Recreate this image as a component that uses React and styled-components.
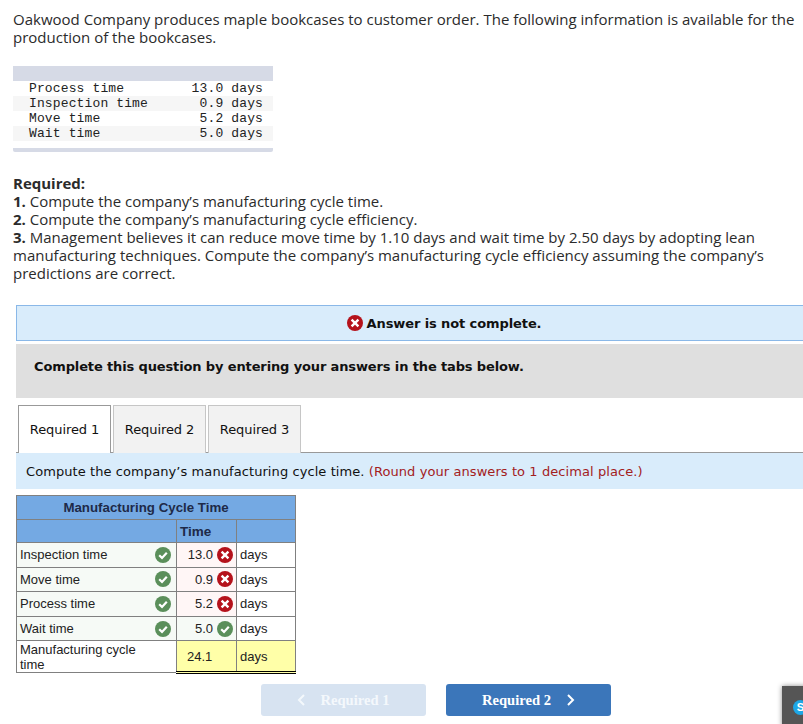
import React from 'react';
import styled, { createGlobalStyle } from 'styled-components';

const Global = createGlobalStyle`
  html, body { margin: 0; padding: 0; background: #fff; }
  body { width: 803px; height: 724px; overflow: hidden; position: relative; font-family: "Open Sans", "Liberation Sans", sans-serif; color: #222; }
`;
const Page = styled.div`display: flex; flex-direction: column; width: 803px; height: 724px; overflow: hidden;`;
const Prose = styled.div`padding: ${p => p.$pad || '0 0 0 13px'}; font-size: 15px; line-height: 18px; width: 800px; box-sizing: border-box; color: #2b2b2b;`;
const DataWrap = styled.div`margin: 20px 0 0 13px; width: 260px; border-bottom: 4px solid #d6dae6; border-radius: 0 0 2px 2px; padding-bottom: 7px;`;
const DataHead = styled.div`height: 15px; background: #d6dae6;`;
const DataRow = styled.div`display: grid; grid-template-columns: 1fr auto; height: 15px; padding: 0 10px 0 16px; background: ${p => p.$alt ? '#f6f6f6' : '#fff'}; font: 13px/15px "Liberation Mono", monospace; letter-spacing: 0.13px; color: #222; white-space: pre;`;
const Required = styled(Prose)`margin-top: 22px;`;
const Strong = styled.b`font-weight: 700;`;
const Answer = styled.div`margin: 23px 0 0 16px; width: 856px; height: 36px; box-sizing: border-box; border: 1px solid #8ab8e8; background: #d9ecfb; display: flex; align-items: center; justify-content: center; gap: 4px; font: 700 13px "DejaVu Sans", Verdana, sans-serif; color: #111; letter-spacing: -0.1px;`;
const Grey = styled.div`margin: 3px 0 0 16px; width: 800px; height: 54px; box-sizing: border-box; background: #dfdfdf; padding: 14px 18px; font: 700 13px/18px "DejaVu Sans", Verdana, sans-serif; color: #111; letter-spacing: -0.13px;`;
const Tabs = styled.div`display: flex; gap: 2px; margin: 7px 0 0 18px; height: 47px; position: relative; z-index: 1;`;
const Tab = styled.div`width: 93px; box-sizing: border-box; height: 48px; border: 1px solid ${p => p.$active ? '#999' : '#c6c6c6'}; border-bottom: none; background: ${p => p.$active ? '#fff' : '#f2f2f2'}; display: flex; align-items: center; justify-content: center; font: 13px "DejaVu Sans", Verdana, sans-serif; color: #111; padding-bottom: 1px; letter-spacing: -0.08px;`;
const Instr = styled.div`margin-left: 16px; width: 800px; height: 37px; box-sizing: border-box; border-top: 1px solid #999; background: #d9ecfb; padding: 10px; font: 13px/18px "DejaVu Sans", Verdana, sans-serif; color: #111; letter-spacing: 0.08px; position: relative; z-index: ${p => p.$over ? 2 : 0};`;
const Hint = styled.span`color: #a3201d;`;
const Table = styled.table`margin: 6px 0 0 16px; width: 279px; border-collapse: collapse; table-layout: fixed; font: 13px/15px "Liberation Sans", Arial, sans-serif; color: #222;`;
const Title = styled.th`height: 23px; padding: 0 20px 0 0; background: #74a9e3; border: 1px solid #808080; font: 700 13.3px "Liberation Sans", Arial, sans-serif; color: #1e2a48;`;
const Sub = styled.th`height: 22px; padding: 0 3px; background: #74a9e3; border: 1px solid #808080; text-align: left; font: 700 13.5px "Liberation Sans", Arial, sans-serif; color: #1e2a48;`;
const Label = styled.td`height: ${p => p.$h || 23.6}px; padding: 0 3px; border: 1px solid #808080; background: ${p => p.$plain ? '#fff' : '#f6faf6'};`;
const LabelInner = styled.div`display: flex; justify-content: space-between; align-items: center; padding-right: 2px;`;
const Value = styled.td`padding: 0 3px 0 0; border: 1px solid #808080; background: ${p => p.$bg};`;
const ValueInner = styled.div`display: flex; justify-content: flex-end; align-items: center; gap: 4px;`;
const Unit = styled.td`padding: 0 3px; border: 1px solid #808080; background: ${p => p.$bg || '#fff'};`;
const Total = styled.td`padding: 0 0 0 10px; border: 1px solid #808080; border-bottom: 3px double #000; background: #ffffa8;`;
const TotalUnit = styled(Unit)`border-bottom: 3px double #000;`;
const Nav = styled.div`display: flex; gap: 20px; margin: 10px 0 0 261px;`;
const NavBtn = styled.div`width: 165px; height: 32px; border-radius: 3px; background: ${p => p.$off ? '#d7e3f1' : '#3b76ba'}; color: ${p => p.$off ? '#f4f8fc' : '#fff'}; display: flex; align-items: center; justify-content: center; gap: ${p => p.$off ? 14 : 15}px; font: 700 14.6px "Liberation Serif", "Times New Roman", serif;`;
const Chat = styled.div`position: absolute; left: 782px; top: 686px; width: 30px; height: 40px; background: #555; box-shadow: 0 0 5px rgba(0,0,0,.45); overflow: hidden;`;
const ChatMark = styled.div`position: absolute; left: 11px; top: 14px; width: 15px; height: 15px; border-radius: 50%; background: #1ea7e6; color: #fff; font: 700 11px/15px "Liberation Sans", sans-serif; text-align: center;`;

const Mark = ({ ok, size = 16 }) => ok ? (
  <svg width={size} height={size} viewBox="0 0 16 16" style={{ flex: 'none' }}>
    <circle cx="8" cy="8" r="8" fill="#5a8f5a" />
    <path d="M4.2 8.3 7 10.9 11.8 5.8" fill="none" stroke="#fff" strokeWidth="2.2" />
  </svg>
) : (
  <svg width={size} height={size} viewBox="0 0 16 16" style={{ flex: 'none' }}>
    <circle cx="8" cy="8" r="8" fill="#b5121b" />
    <path d="M4.6 4.6 11.4 11.4M11.4 4.6 4.6 11.4" fill="none" stroke="#fff" strokeWidth="2.4" />
  </svg>
);

const Chevron = ({ left }) => (
  <svg width="9" height="12" viewBox="0 0 9 12" style={{ flex: 'none' }}>
    <path d={left ? 'M7 1 2 6l5 5' : 'M2 1l5 5-5 5'} fill="none" stroke="currentColor" strokeWidth="2" />
  </svg>
);

const data = [
  ['Process time', '13.0 days'],
  ['Inspection time', ' 0.9 days'],
  ['Move time', ' 5.2 days'],
  ['Wait time', ' 5.0 days'],
];
const rows = [
  ['Inspection time', '13.0', false],
  ['Move time', '0.9', false],
  ['Process time', '5.2', false],
  ['Wait time', '5.0', true],
];

export default function App() {
  return (
    <Page>
      <Global />
      <Prose $pad="10px 0 0 13px">
        Oakwood Company produces maple bookcases to customer order. The following information is available for the<br />production of the bookcases.
      </Prose>
      <DataWrap>
        <DataHead />
        {data.map((r, i) => (
          <DataRow key={r[0]} $alt={i % 2 === 1}><span>{r[0]}</span><span>{r[1]}</span></DataRow>
        ))}
      </DataWrap>
      <Required>
        <Strong>Required:</Strong><br />
        <Strong>1.</Strong> Compute the company’s manufacturing cycle time.<br />
        <Strong>2.</Strong> Compute the company’s manufacturing cycle efficiency.<br />
        <Strong>3.</Strong> Management believes it can reduce move time by 1.10 days and wait time by 2.50 days by adopting lean<br />manufacturing techniques. Compute the company’s manufacturing cycle efficiency assuming the company’s<br />predictions are correct.
      </Required>
      <Answer><Mark size={16} /> Answer is not complete.</Answer>
      <Grey>Complete this question by entering your answers in the tabs below.</Grey>
      <Tabs>
        <Tab $active>Required 1</Tab>
        <Tab>Required 2</Tab>
        <Tab>Required 3</Tab>
      </Tabs>
      <Instr>Compute the company’s manufacturing cycle time. <Hint>(Round your answers to 1 decimal place.)</Hint></Instr>
      <Table>
        <colgroup><col width="160" /><col width="60" /><col width="59" /></colgroup>
        <thead>
          <tr><Title colSpan={3}>Manufacturing Cycle Time</Title></tr>
          <tr><Sub /><Sub>Time</Sub><Sub /></tr>
        </thead>
        <tbody>
          {rows.map(r => (
            <tr key={r[0]}>
              <Label><LabelInner><span>{r[0]}</span><Mark ok /></LabelInner></Label>
              <Value $bg={r[2] ? '#f6faf6' : '#fff6f6'}><ValueInner><span>{r[1]}</span><Mark ok={r[2]} /></ValueInner></Value>
              <Unit>days</Unit>
            </tr>
          ))}
          <tr>
            <Label $plain $h={31}>Manufacturing cycle<br />time</Label>
            <Total>24.1</Total>
            <TotalUnit $bg="#ffffa8">days</TotalUnit>
          </tr>
        </tbody>
      </Table>
      <Nav>
        <NavBtn $off><Chevron left /> Required 1</NavBtn>
        <NavBtn>Required 2 <Chevron /></NavBtn>
      </Nav>
      <Chat><ChatMark>S</ChatMark></Chat>
    </Page>
  );
}
